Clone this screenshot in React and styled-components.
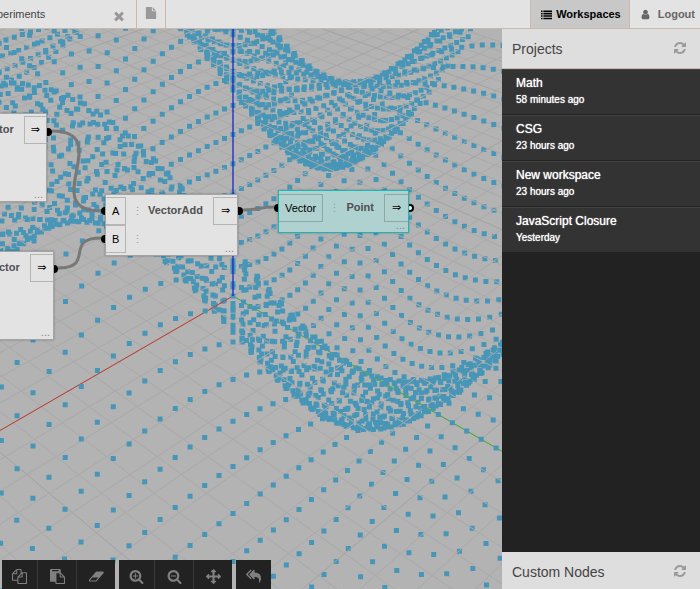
import React from "react";
import styled, { createGlobalStyle, css } from "styled-components";

const GlobalStyle = createGlobalStyle`
  * { box-sizing: border-box; }
  body {
    margin: 0;
    font-family: "Liberation Sans", Arial, Helvetica, sans-serif;
    font-size: 11px;
    background: #b3b3b3;
  }
  button { font: inherit; color: inherit; border: 0; padding: 0; background: none; cursor: pointer; }
  ul { list-style: none; margin: 0; padding: 0; }
`;

/* ---------- icons ---------- */

const LENS =
  "M1216 832q0-185-131.5-316.5t-316.5-131.5-316.5 131.5-131.5 316.5 131.5 316.5 316.5 131.5 316.5-131.5 131.5-316.5zm512 832q0 53-37.5 90.5t-90.5 37.5q-54 0-90-38l-343-342q-179 124-399 124-143 0-273.5-55.5t-225-150-150-225-55.5-273.5 55.5-273.5 150-225 225-150 273.5-55.5 273.5 55.5 225 150 150 225 55.5 273.5q0 220-124 399l343 343q37 37 37 90z";

const ICONS = {
  close:
    "M1490 1322q0 40-28 68l-136 136q-28 28-68 28t-68-28l-294-294-294 294q-28 28-68 28t-68-28l-136-136q-28-28-28-68t28-68l294-294-294-294q-28-28-28-68t28-68l136-136q28-28 68-28t68 28l294 294 294-294q28-28 68-28t68 28l136 136q28 28 28 68t-28 68l-294 294 294 294q28 28 28 68z",
  file:
    "M1152 512v-472q22 14 36 28l408 408q14 14 28 36h-472zm-128 32q0 40 28 68t68 28h544v1056q0 40-28 68t-68 28h-1344q-40 0-68-28t-28-68v-1600q0-40 28-68t68-28h800v544z",
  list:
    "M0 256h256v256h-256zM384 256h1408v256h-1408zM0 640h256v256h-256zM384 640h1408v256h-1408zM0 1024h256v256h-256zM384 1024h1408v256h-1408zM0 1408h256v256h-256zM384 1408h1408v256h-1408z",
  user:
    "M1536 1399q0 109-62.5 187t-150.5 78h-854q-88 0-150.5-78t-62.5-187q0-85 8.5-160.5t31.5-152 58.5-131 94-89 134.5-34.5q131 128 313 128t313-128q76 0 134.5 34.5t94 89 58.5 131 31.5 152 8.5 160.5zm-256-887q0 159-112.5 271.5t-271.5 112.5-271.5-112.5-112.5-271.5 112.5-271.5 271.5-112.5 271.5 112.5 112.5 271.5z",
  refresh:
    "M1639 1056q0 5-1 7-64 268-268 434.5t-478 166.5q-146 0-282.5-55t-243.5-157l-129 129q-19 19-45 19t-45-19-19-45v-448q0-26 19-45t45-19h448q26 0 45 19t19 45-19 45l-137 137q71 66 161 102t187 36q134 0 250-65t186-179q11-17 53-117 8-23 30-23h192q13 0 22.5 9.5t9.5 22.5zm25-800v448q0 26-19 45t-45 19h-448q-26 0-45-19t-19-45 19-45l138-138q-148-137-349-137-134 0-250 65t-186 179q-11 17-53 117-8 23-30 23h-199q-13 0-22.5-9.5t-9.5-22.5v-7q65-268 270-434.5t480-166.5q146 0 284 55.5t245 156.5l130-129q19-19 45-19t45 19 19 45z",
  copy:
    "M1696 384q40 0 68 28t28 68v1216q0 40-28 68t-68 28h-960q-40 0-68-28t-28-68v-288h-544q-40 0-68-28t-28-68v-672q0-40 20-88t48-76l408-408q28-28 76-48t88-20h416q40 0 68 28t28 68v328q68-40 128-40h416zm-544 213l-299 299h299v-299zm-640-384l-299 299h299v-299zm196 647l316-316v-416h-384v416q0 40-28 68t-68 28h-416v640h512v-256q0-40 20-88t48-76zm956 804v-1152h-384v416q0 40-28 68t-68 28h-416v640h896z",
  paste:
    "M768 1664h896v-640h-416q-40 0-68-28t-28-68v-416h-384v1152zm256-1440v-64q0-13-9.5-22.5t-22.5-9.5h-704q-13 0-22.5 9.5t-9.5 22.5v64q0 13 9.5 22.5t22.5 9.5h704q13 0 22.5-9.5t9.5-22.5zm256 672h299l-299-299v299zm512 128v672q0 40-28 68t-68 28h-960q-40 0-68-28t-28-68v-160h-544q-40 0-68-28t-28-68v-1344q0-40 28-68t68-28h1088q40 0 68 28t28 68v328q21 13 36 28l408 408q28 28 48 76t20 88z",
  erase:
    "M832 1408l336-384h-768l-336 384h768zm1013-1077q15 34 9.5 71.5t-30.5 65.5l-896 1024q-38 44-96 44h-768q-38 0-69.5-20.5t-47.5-54.5q-15-34-9.5-71.5t30.5-65.5l896-1024q38-44 96-44h768q38 0 69.5 20.5t47.5 54.5z",
  zoomIn:
    "M1088 800v64q0 13-9.5 22.5t-22.5 9.5h-224v224q0 13-9.5 22.5t-22.5 9.5h-64q-13 0-22.5-9.5t-9.5-22.5v-224h-224q-13 0-22.5-9.5t-9.5-22.5v-64q0-13 9.5-22.5t22.5-9.5h224v-224q0-13 9.5-22.5t22.5-9.5h64q13 0 22.5 9.5t9.5 22.5v224h224q13 0 22.5 9.5t9.5 22.5z" +
    LENS,
  zoomOut:
    "M1088 800v64q0 13-9.5 22.5t-22.5 9.5h-576q-13 0-22.5-9.5t-9.5-22.5v-64q0-13 9.5-22.5t22.5-9.5h576q13 0 22.5 9.5t9.5 22.5z" +
    LENS,
  fit:
    "M1792 896q0 26-19 45l-256 256q-19 19-45 19t-45-19-19-45v-128h-384v384h128q26 0 45 19t19 45-19 45l-256 256q-19 19-45 19t-45-19l-256-256q-19-19-19-45t19-45 45-19h128v-384h-384v128q0 26-19 45t-45 19-45-19l-256-256q-19-19-19-45t19-45l256-256q19-19 45-19t45 19 19 45v128h384v-384h-128q-26 0-45-19t-19-45 19-45l256-256q19-19 45-19t45 19l256 256q19 19 19 45t-19 45-45 19h-128v384h384v-128q0-26 19-45t45-19 45 19l256 256q19 19 19 45z",
  undo:
    "M640 1082v70q0 42-39 59-13 5-25 5-27 0-45-19l-512-512q-19-19-19-45t19-45l512-512q29-31 70-14 39 17 39 59v69l-397 398q-19 19-19 45t19 45zm1152 58q0 58-17 133.5t-38.5 138-48 125-40.5 90.5l-20 40q-8 17-28 17-6 0-9-1-25-8-23-34 43-400-106-565-64-71-170.5-110.5t-267.5-52.5v251q0 42-39 59-13 5-25 5-27 0-45-19l-512-512q-19-19-19-45t19-45l512-512q29-31 70-14 39 17 39 59v262q411 28 599 221 169 173 169 509z",
};

const IconSvg = styled.svg`
  display: block;
  flex: none;
  width: ${(p) => p.$size}px;
  height: ${(p) => p.$size}px;
  fill: currentColor;
`;

function Icon({ name, size = 14 }) {
  const wide = name === "erase";
  return (
    <IconSvg $size={size} viewBox={wide ? "-32 0 1920 1792" : "0 0 1792 1792"} aria-hidden="true">
      <path fillRule="evenodd" d={ICONS[name]} />
    </IconSvg>
  );
}

/* ---------- page frame ---------- */

const Page = styled.div`
  display: flex;
  flex-direction: column;
  height: 100vh;
  overflow: hidden;
`;

const Header = styled.header`
  display: flex;
  flex: none;
  height: 29px;
  background: #e3e3e3;
  border-bottom: 1px solid #ccb8aa;
`;

const Tab = styled.div`
  display: flex;
  align-items: center;
  justify-content: space-between;
  width: 137px;
  padding-right: 10px;
  color: #444;
  border-right: 1px solid #ccb8aa;
`;

const TabLabel = styled.span`
  margin-left: -3px;
`;

const CloseButton = styled.button`
  color: #999;
  padding-top: 3px;
`;

const NewTabButton = styled.button`
  display: flex;
  justify-content: center;
  width: 29px;
  padding-top: 7px;
  color: #999;
  border-right: 1px solid #ccb8aa;
`;

const HeaderNav = styled.nav`
  display: flex;
  margin-left: auto;
`;

const HeaderButton = styled.button`
  display: flex;
  align-items: center;
  gap: ${(p) => (p.$active ? 4 : 7)}px;
  padding: 0 ${(p) => (p.$active ? 8 : 5)}px 0 10px;
  font-weight: bold;
  color: ${(p) => (p.$active ? "#000" : "#666")};
  background: ${(p) => (p.$active ? "#c8c8c8" : "transparent")};
  ${(p) =>
    p.$active &&
    css`
      border-left: 1px solid #ccb8aa;
      border-right: 1px solid #ccb8aa;
    `}
`;

const Body = styled.div`
  display: flex;
  flex: 1;
  min-height: 0;
`;

/* ---------- sidebar ---------- */

const Sidebar = styled.aside`
  display: flex;
  flex-direction: column;
  flex: none;
  width: 198px;
  background: #222;
`;

const PanelHeader = styled.div`
  display: flex;
  justify-content: space-between;
  padding: 12px 13px ${(p) => (p.$last ? 9 : 11)}px 10px;
  background: #dedede;
  color: #444;
  border-bottom: ${(p) => (p.$last ? "0" : "1px solid #ccb8aa")};
`;

const PanelTitle = styled.h2`
  margin: 0;
  font-size: 14px;
  line-height: 16px;
  font-weight: normal;
`;

const RefreshButton = styled.button`
  align-self: flex-start;
  color: #999;
`;

const ProjectList = styled.ul`
  flex: 1;
`;

const ProjectButton = styled.button`
  display: flex;
  flex-direction: column;
  justify-content: flex-start;
  width: 100%;
  padding: 4px 14px 6px;
  text-align: left;
  color: #fff;
  background: #333;
  border-top: 1px solid #444;
  border-bottom: 1px solid #222;
  text-shadow: 0 0 1px #fff;
`;

const ProjectName = styled.span`
  font-size: 12px;
  line-height: 18px;
`;

const ProjectTime = styled.span`
  font-size: 10px;
  line-height: 16px;
`;

/* ---------- workspace ---------- */

const Workspace = styled.main`
  position: relative;
  flex: 1;
  min-width: 0;
  overflow: hidden;
  background: #b3b3b3;
`;

const Layer = styled.svg`
  position: absolute;
  inset: 0;
  width: 100%;
  height: 100%;
`;

const NodeBox = styled.section`
  position: absolute;
  left: ${(p) => p.$x}px;
  top: ${(p) => p.$y}px;
  width: ${(p) => p.$w}px;
  min-height: ${(p) => (p.$tall ? 89 : 0)}px;
  display: flex;
  align-items: flex-start;
  padding: ${(p) => (p.$selected ? "3px 0 10px" : "2px 0")};
  background: ${(p) => (p.$selected ? "#afd1d0" : "#e3e3e3")};
  border: 1px solid ${(p) => (p.$selected ? "#16b8b8" : "#a4a4a4")};
  box-shadow: 0 0 2px rgba(0, 0, 0, 0.3);
`;

const Inputs = styled.div`
  display: flex;
  flex-direction: column;
`;

const InputRow = styled.div`
  display: flex;
  align-items: center;
  color: #999;
`;

const Port = styled.button`
  height: 28px;
  min-width: 20px;
  padding: 0 6px;
  color: #000;
  border: 1px solid rgba(0, 0, 0, 0.2);
  border-left: 0;
  margin-right: 6px;
`;

const OutPort = styled.button`
  width: 24px;
  height: 28px;
  font-family: "DejaVu Sans", sans-serif;
  line-height: 12px;
  color: #000;
  border: 1px solid rgba(0, 0, 0, 0.2);
  border-right: 0;
`;

const NodeTitle = styled.h3`
  margin: 0 10px 0 auto;
  font-size: 11px;
  line-height: 27px;
  color: #505050;
`;

const Resize = styled.span`
  position: absolute;
  right: 3px;
  bottom: 3px;
  line-height: 8px;
  color: #888;
`;

const Toolbar = styled.div`
  position: absolute;
  left: 2px;
  bottom: 0;
  display: flex;
  gap: 4px;
`;

const ToolGroup = styled.div`
  display: flex;
  background: #222;
`;

const ToolButton = styled.button`
  display: flex;
  align-items: center;
  justify-content: center;
  width: 39px;
  height: 29px;
  padding-top: 3px;
  color: #808080;
  border-left: 1px solid #3a3a3a;
  &:first-child { width: 35px; border-left: 0; }
`;

/* ---------- 3D scene ---------- */

const FOCAL = 1105;
const DISTANCE = 74.5;
const CENTER = { x: 233, y: 267 };
const EXTENT = 50;

function project(x, y, z) {
  const depth = DISTANCE - (x + y + z) / Math.sqrt(3);
  return [
    CENTER.x + (FOCAL * (y - x)) / Math.SQRT2 / depth,
    CENTER.y + (FOCAL * (x + y - 2 * z)) / Math.sqrt(6) / depth,
  ];
}

function surfacePaths() {
  let below = "";
  let above = "";
  for (let i = -EXTENT; i <= EXTENT; i++) {
    for (let j = -EXTENT; j <= EXTENT; j++) {
      const z = 20 * Math.sin(i / 10) * Math.cos(j / 10);
      const [u, v] = project(i, j, z);
      const square = `M${(u - 2.5).toFixed(1)} ${(v - 2.5).toFixed(1)}h5v5h-5z`;
      if (z < 0) below += square;
      else above += square;
    }
  }
  return { below, above };
}

function gridPath(major) {
  let d = "";
  for (let k = -EXTENT; k <= EXTENT; k += 2) {
    if ((k % 20 === 0) !== major) continue;
    d += `M${project(k, -EXTENT, 0)}L${project(k, EXTENT, 0)}`;
    d += `M${project(-EXTENT, k, 0)}L${project(EXTENT, k, 0)}`;
  }
  return d;
}

const SURFACE = surfacePaths();
const MINOR = gridPath(false);
const MAJOR = gridPath(true);

function Scene() {
  const origin = project(0, 0, 0);
  return (
    <Layer fill="none" role="img" aria-label="Surface plot">
      <path d={SURFACE.below} fill="#4796b8" />
      <path d={MINOR} stroke="#a9a9a9" />
      <path d={MAJOR} stroke="#a2a2a2" />
      <path d={`M${origin}L${project(EXTENT, 0, 0)}`} stroke="#c0392b" />
      <path d={`M${origin}L${project(0, EXTENT, 0)}`} stroke="#3fae2f" />
      <path d={SURFACE.above} fill="#4796b8" />
      <path d={`M${origin}L${project(0, 0, EXTENT)}`} stroke="#0b1bc8" strokeOpacity="0.6" strokeWidth="2" />
    </Layer>
  );
}

/* ---------- nodes ---------- */

const NODES = [
  { id: 1, title: "tor", x: -2, y: 84, w: 49, inputs: [] },
  { id: 2, title: "ctor", x: -2, y: 222, w: 56, inputs: [] },
  { id: 3, title: "VectorAdd", x: 105, y: 165, w: 133, inputs: ["A", "B"] },
  { id: 4, title: "Point", x: 278, y: 161, w: 131, inputs: ["Vector"], selected: true },
];

function Node({ node }) {
  return (
    <NodeBox
      $x={node.x}
      $y={node.y}
      $w={node.w}
      $selected={node.selected}
      $tall={node.inputs.length === 0}
    >
      <Inputs>
        {node.inputs.map((name) => (
          <InputRow key={name}>
            <Port type="button">{name}</Port>⋮
          </InputRow>
        ))}
      </Inputs>
      <NodeTitle>{node.title}</NodeTitle>
      <OutPort type="button" aria-label={`${node.title} output`}>⇒</OutPort>
      <Resize aria-hidden="true">...</Resize>
    </NodeBox>
  );
}

function Wires() {
  return (
    <Layer fill="none" aria-hidden="true">
      <g fill="#000">
        <circle cx="48" cy="103" r="4" />
        <circle cx="54" cy="240" r="4" />
        <circle cx="105" cy="182" r="4" />
        <circle cx="105" cy="210" r="4" />
        <circle cx="239" cy="182" r="4" />
        <circle cx="278" cy="179" r="4" />
      </g>
      <circle cx="410" cy="179" r="3" fill="#fff" stroke="#000" strokeWidth="2" />
      <g stroke="#787878" strokeWidth="3">
        <path d="M52 102C117 102 36 182 101 182" />
        <path d="M58 239C96 239 63 209 101 209" />
        <path d="M243 181C257 181 260 178 274 178" />
      </g>
    </Layer>
  );
}

const TOOLS = [
  [["copy", "Copy"], ["paste", "Paste"], ["erase", "Delete"]],
  [["zoomIn", "Zoom in"], ["zoomOut", "Zoom out"], ["fit", "Fit to view"]],
  [["undo", "Undo"]],
];

const PROJECTS = [
  ["Math", "58 minutes ago"],
  ["CSG", "23 hours ago"],
  ["New workspace", "23 hours ago"],
  ["JavaScript Closure", "Yesterday"],
];

export default function App() {
  return (
    <Page>
      <GlobalStyle />
      <Header>
        <Tab>
          <TabLabel>periments</TabLabel>
          <CloseButton type="button" aria-label="Close tab"><Icon name="close" /></CloseButton>
        </Tab>
        <NewTabButton type="button" aria-label="New workspace"><Icon name="file" size={12} /></NewTabButton>
        <HeaderNav>
          <HeaderButton type="button" $active><Icon name="list" size={11} />Workspaces</HeaderButton>
          <HeaderButton type="button"><Icon name="user" size={11} />Logout</HeaderButton>
        </HeaderNav>
      </Header>
      <Body>
        <Workspace>
          <Scene />
          <Wires />
          {NODES.map((node) => <Node key={node.id} node={node} />)}
          <Toolbar role="toolbar">
            {TOOLS.map((group) => (
              <ToolGroup key={group[0][0]}>
                {group.map(([icon, label]) => (
                  <ToolButton key={icon} type="button" aria-label={label}><Icon name={icon} size={15} /></ToolButton>
                ))}
              </ToolGroup>
            ))}
          </Toolbar>
        </Workspace>
        <Sidebar>
          <PanelHeader>
            <PanelTitle>Projects</PanelTitle>
            <RefreshButton type="button" aria-label="Refresh projects"><Icon name="refresh" /></RefreshButton>
          </PanelHeader>
          <ProjectList>
            {PROJECTS.map(([name, time]) => (
              <li key={name}>
                <ProjectButton type="button">
                  <ProjectName>{name}</ProjectName>
                  <ProjectTime>{time}</ProjectTime>
                </ProjectButton>
              </li>
            ))}
          </ProjectList>
          <PanelHeader $last>
            <PanelTitle>Custom Nodes</PanelTitle>
            <RefreshButton type="button" aria-label="Refresh custom nodes"><Icon name="refresh" /></RefreshButton>
          </PanelHeader>
        </Sidebar>
      </Body>
    </Page>
  );
}
